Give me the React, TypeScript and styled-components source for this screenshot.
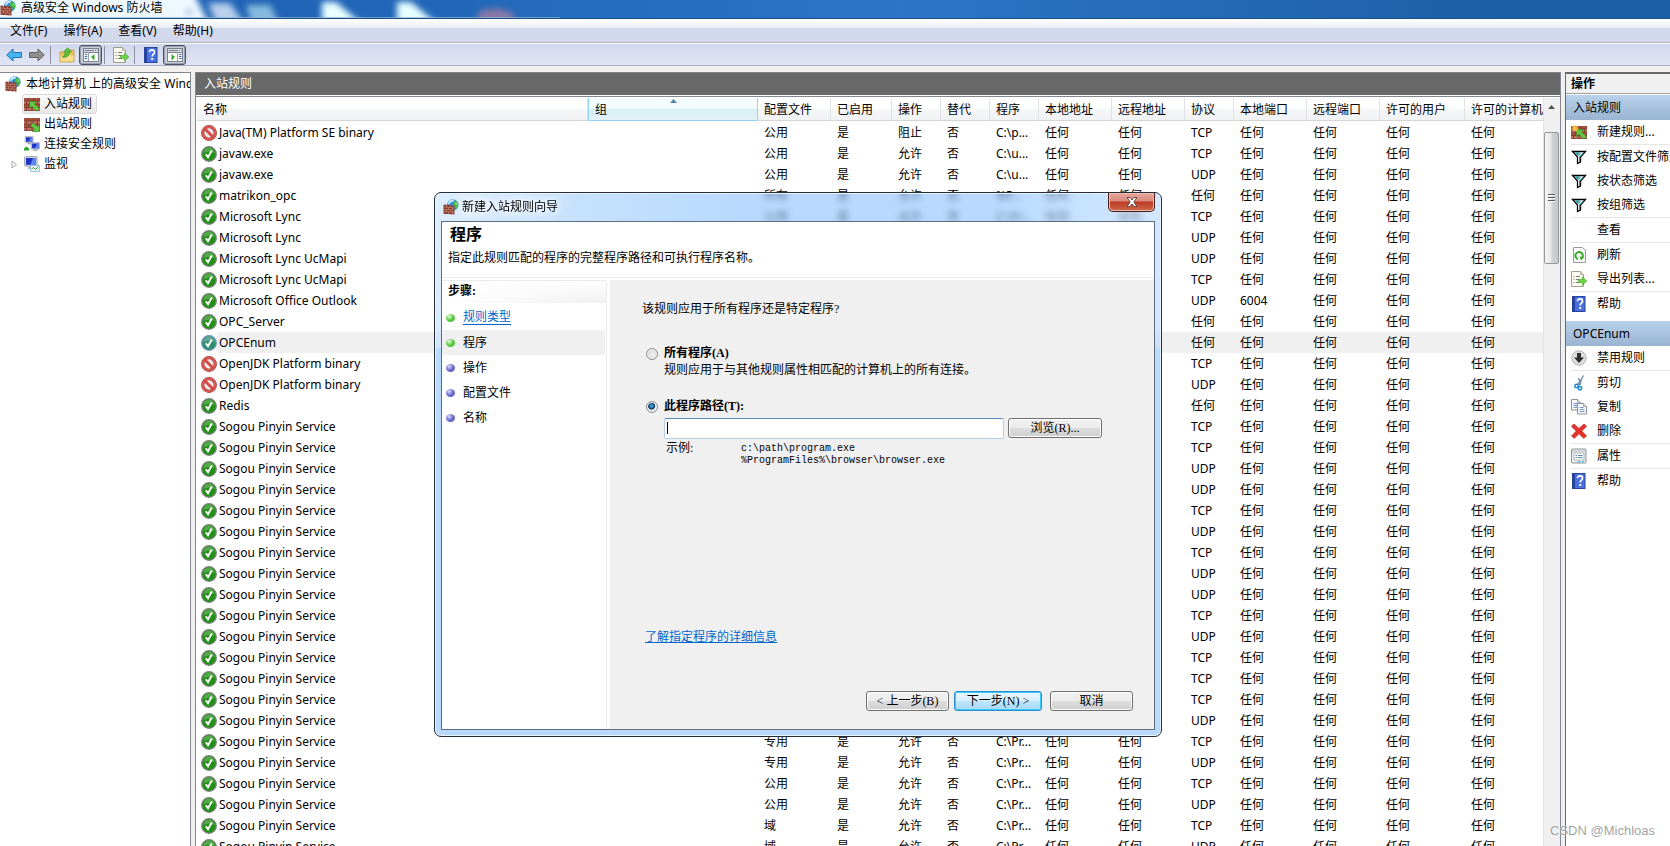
import React from "react";
import styled, { createGlobalStyle, css } from "styled-components";

const UI_FONT = `"Noto Sans", "Noto Sans CJK SC", sans-serif`;
const WIZARD_FONT = `"Liberation Serif", "Noto Sans CJK SC", serif`;

const GlobalStyle = createGlobalStyle`
  *, *::before, *::after { box-sizing: border-box; }
  body { margin: 0; font: 12px/20px ${UI_FONT}; color: #000; background: #f0f0f0; overflow: hidden; }
  button, input { font: inherit; color: inherit; margin: 0; }
`;

/* ---------- icons ---------- */

const Icon = styled.svg`
  display: block;
  width: 16px;
  height: 16px;
  flex: none;
`;

const Bricks = () => (
  <g>
    <rect x="0" y="2" width="16" height="13" fill="#7c3c2e" />
    {[0, 1, 2, 3].map((r) => (
      <g key={r} fill={r % 2 ? "#bd7160" : "#a9503d"}>
        <rect x="0" y={2 + r * 3.3} width={r % 2 ? 2 : 4} height="2.5" />
        <rect x={r % 2 ? 3 : 5} y={2 + r * 3.3} width="4.500" height="2.5" />
        <rect x={r % 2 ? 8.5 : 10.5} y={2 + r * 3.3} width="4.500" height="2.5" />
        <rect x={r % 2 ? 14 : 15.5} y={2 + r * 3.3} width={r % 2 ? 2 : 0.5} height="2.5" />
      </g>
    ))}
  </g>
);

const FirewallIcon = () => (
  <Icon viewBox="0 0 16 16">
    <circle cx="9.800" cy="6" r="5.700" fill="#2f86d8" />
    <path d="M5.500 3c1.500-2 4-2.700 6-2.300l-1 1.800-2.500.8-1.500 2-1.500.200z" fill="#c9edff" />
    <path d="M10 3l3-1.200c2 1.500 2.800 4 2.200 6L13 10.500l-1-3-2.500-1.500z" fill="#3fb84a" />
    <path d="M12.500 3l1.500 1-1 2z" fill="#b8f0a0" />
    <path d="M.5 5.500l11 1.200v8.800l-11-.8z" fill="#8a3828" />
    <g stroke="#d09a8b" strokeWidth=".6" fill="none">
      <path d="M.5 8l11 .8M.5 10.400l11 .6M.5 12.600l11 .6" />
      <path d="M3.500 5.900v2.300M7.500 6.300v2.300M5.500 8.400v2.200M9.500 8.600v2.200M3.500 10.600v2.200M7.500 10.800v2.200M5.500 12.900v2M9.500 13.100v2" />
    </g>
  </Icon>
);

const InboundArrow = () => (
  <path d="M5.500 5.500h7l-2.200 2.200 5.200 4.800-2.700 2.700-5-5-2.300 2.300z" fill="#63c944" stroke="#2f8a20" strokeWidth=".7" />
);

const InboundIcon = () => (
  <Icon viewBox="0 0 16 16">
    <Bricks />
    <InboundArrow />
  </Icon>
);

const OutboundIcon = () => (
  <Icon viewBox="0 0 16 16">
    <Bricks />
    <path d="M15.500 15.500h-7l2.200-2.200-4.200-3.800 2.700-2.700 4 4 2.300-2.300z" fill="#63c944" stroke="#2f8a20" strokeWidth=".7" />
  </Icon>
);

const NewRuleIcon = () => (
  <Icon viewBox="0 0 16 16">
    <Bricks />
    <InboundArrow />
    <path d="M4 0l.8 2.700L7.500 1.500 6 4l2.300 1-2.500.8L6 8 4 6.500 2 8l.3-2.300L0 5l2-1L.8 1.500l2.500 1z" fill="#f7c23f" />
  </Icon>
);

const Monitor = ({ x, y, s }: { x: number; y: number; s: number }) => (
  <g transform={`translate(${x} ${y}) scale(${s})`}>
    <rect x="0" y="0" width="11" height="8.500" rx="1" fill="#cfd3dc" stroke="#8b91a0" strokeWidth=".6" />
    <rect x="1.300" y="1.300" width="8.400" height="6" fill="#1d35c4" />
    <path d="M5 7.300L7.500 1.300h2.200v6z" fill="#5c86f4" />
    <path d="M4 8.700h3l1.500 2h-6z" fill="#a9adb8" />
  </g>
);

const ConnectionIcon = () => (
  <Icon viewBox="0 0 16 16">
    <Monitor x={1} y={0.3} s={0.75} />
    <Monitor x={7} y={6.500} s={0.8} />
    <path d="M0 14.500v-2l2.500-2 2.500 2v2z" fill="#2fa62f" />
  </Icon>
);

const MonitorIcon = () => (
  <Icon viewBox="0 0 16 16">
    <Monitor x={0.500} y={0.500} s={1.150} />
    <rect x="6.500" y="9.500" width="9" height="6" fill="#eef6ff" stroke="#7fb4d8" strokeWidth=".7" />
    <path d="M7.500 13l2-1.500 2 2 3-3" stroke="#2fa62f" fill="none" />
  </Icon>
);

const AllowIcon = ({ selected }: { selected?: boolean }) => (
  <Icon viewBox="0 0 16 16">
    <circle cx="8" cy="8" r="7.300" fill={selected ? "#2f8f6f" : "#219016"} stroke={selected ? "#6f94bd" : "#7f827f"} strokeWidth="1.300" />
    <path d="M2.500 7a5.500 5.500 0 0 1 11 0c-3-1.500-8-1.500-11 0z" fill="#fff" opacity=".22" />
    <path d="M4.800 8.300l2.200 3 3.800-6.800" stroke="#fff" strokeWidth="1.900" fill="none" />
  </Icon>
);

const BlockIcon = () => (
  <Icon viewBox="0 0 16 16">
    <circle cx="8" cy="8" r="6.300" fill="#f0eaea" stroke="#8f4a48" strokeWidth="3.300" />
    <circle cx="8" cy="8" r="6.300" fill="none" stroke="#de5650" strokeWidth="2.300" />
    <path d="M3.500 3.500l9 9" stroke="#d64a45" strokeWidth="2.800" />
  </Icon>
);

const HelpIcon = () => (
  <Icon viewBox="0 0 16 16">
    <rect x="1.500" y=".5" width="12.500" height="15" fill="#4a70de" stroke="#27439c" />
    <rect x="1.500" y=".5" width="2.500" height="15" fill="#27439c" />
    <path d="M6.500 5.200c0-3.200 5-3 5 0 0 2-2.300 2-2.300 4.300" stroke="#fff" strokeWidth="1.700" fill="none" />
    <rect x="8.200" y="11" width="2" height="2" fill="#fff" />
  </Icon>
);

const ArrowIcon = ({ back }: { back?: boolean }) => (
  <Icon viewBox="0 0 16 16">
    {back ? (
      <path d="M.7 8l6.300-6v3.500h8.500v5H7V14z" fill="#45b4ef" stroke="#2372b4" />
    ) : (
      <path d="M15.300 8L9 2v3.500H.5v5H9V14z" fill="#8f8f8f" stroke="#646464" />
    )}
  </Icon>
);

const FolderUpIcon = () => (
  <Icon viewBox="0 0 16 16">
    <path d="M1 5h5l1-2h8v12H1z" fill="#e9c25c" stroke="#b98d2c" strokeWidth=".7" />
    <path d="M1.500 8.500h13v6h-13z" fill="#f8dd8e" />
    <path d="M3 10c2-1 3-2.500 3.300-5H4.500L8.500.7l4 4.300h-2c0 4-3 6-7.500 5z" fill="#55bf3f" stroke="#2c8a22" strokeWidth=".5" />
  </Icon>
);

const PaneIcon = ({ right }: { right?: boolean }) => (
  <Icon viewBox="0 0 16 16">
    <rect x=".5" y="1.500" width="15" height="13" fill="#fff" stroke="#7b828e" />
    <rect x="1" y="2" width="14" height="3" fill="#d5d9e0" />
    <path d="M2 3.500h9M12 3.500h1M14 3.500h.7M1 5.500h14" stroke="#7b828e" />
    <path d={right ? "M10.500 5v9" : "M5.500 5v9"} stroke="#9aa0aa" />
    <path
      d={right ? "M12 7.500h2.500M12 9.500h2.500M12 11.500h2.500" : "M1.800 7.500h2.500M1.800 9.500h2.500M1.800 11.500h2.500"}
      stroke="#3c6fb8"
    />
    <path d={right ? "M4.500 7l3.500 3-3.500 3.500z" : "M11.500 7L8 10l3.500 3.500z"} fill="#3aa82a" />
  </Icon>
);

const ExportIcon = () => (
  <Icon viewBox="0 0 16 16">
    <path d="M.5.5h9l3 3v12H.5z" fill="#fbfaf0" stroke="#a19d8b" />
    <path d="M9.500.5v3h3" fill="#ddd9c5" stroke="#a19d8b" strokeWidth=".7" />
    <path d="M2.500 5.500h1M5 5.500h4M2.500 8.500h1M5 8.500h3M2.500 11.500h1M5 11.500h3" stroke="#7d7a6c" />
    <path d="M7.500 8.500h4V6l4.300 4-4.300 4v-2.500h-4z" fill="#6dd444" stroke="#3f9c25" strokeWidth=".6" />
  </Icon>
);

const FilterIcon = () => (
  <Icon viewBox="0 0 16 16">
    <path d="M1.500 2.500h13L9.500 8v5l-3 1.500V8z" fill="#fff" stroke="#000" strokeWidth="1.300" />
    <path d="M3.500 3.200H8L7.500 7.500z" fill="#17a3a0" />
    <path d="M9 8v4.500l-1 .8V8l4-4.300h1z" fill="#17a3a0" />
    <path d="M7 3.500h3L8.500 7z" fill="#9a9a9a" />
  </Icon>
);

const RefreshIcon = () => (
  <Icon viewBox="0 0 16 16">
    <path d="M2.500.5h9l3 3v12h-12z" fill="#fafafa" stroke="#9a9a9a" />
    <path d="M7 12.200A3.700 3.700 0 1 1 11 11" stroke="#36ad27" strokeWidth="2" fill="none" />
    <path d="M8.500 9.500l4.500.5-3 3.500z" fill="#36ad27" />
  </Icon>
);

const DisableIcon = () => (
  <Icon viewBox="0 0 16 16">
    <circle cx="8" cy="8" r="7.200" fill="#dedede" stroke="#b3b3b3" />
    <path d="M6 3h4v4.500h3L8 13 3 7.500h3z" fill="#2e2e2e" />
  </Icon>
);

const CutIcon = () => (
  <Icon viewBox="0 0 16 16">
    <path d="M12.500.5L8.500 10l-1.700-1zM7.500 3l1.500 7 1-2.500z" fill="#8fa5ba" stroke="#5f7f9e" strokeWidth=".7" />
    <circle cx="5.500" cy="11" r="1.700" fill="none" stroke="#1c86d1" strokeWidth="1.500" />
    <circle cx="9" cy="13.300" r="1.700" fill="none" stroke="#1c86d1" strokeWidth="1.500" />
  </Icon>
);

const CopyIcon = () => (
  <Icon viewBox="0 0 16 16">
    {[[0.5, 0.5], [6.5, 4.500]].map(([x, y]) => (
      <g key={x} transform={`translate(${x} ${y})`}>
        <path d="M0 0h6l3 3v7.500H0z" fill="#fbfbfd" stroke="#8a8f99" />
        <path d="M6 0v3h3" fill="#dfe3ea" stroke="#8a8f99" strokeWidth=".7" />
        <path d="M2 4h4M2 6h5M2 8h5" stroke="#4f78b8" strokeWidth=".8" />
      </g>
    ))}
  </Icon>
);

const DeleteIcon = () => (
  <Icon viewBox="0 0 16 16">
    <path
      d="M3 1l5 4.500L13 1l2.500 2.300L10.700 8l4.800 5-2.800 2.300L8 10.800 3.300 15.300.5 13l4.800-5L.5 3.300z"
      fill="#e8332d"
      stroke="#b3231e"
      strokeWidth=".7"
    />
  </Icon>
);

const PropertiesIcon = () => (
  <Icon viewBox="0 0 16 16">
    <rect x=".5" y="1" width="14.500" height="14" rx="1" fill="#eef0f2" stroke="#8d9196" />
    <path d="M1 3h14" stroke="#b4b8bd" />
    <rect x="3" y="5" width="10" height="7" fill="#fff" stroke="#9da2a8" strokeWidth=".8" />
    <path d="M4.500 7.500H6M7 7.500h4.500M4.500 9.500H6M7 9.500h4.500" stroke="#5d87b0" />
    <path d="M6.500 13.800h3M11 13.800h2" stroke="#29b6e8" />
  </Icon>
);

/* ---------- window chrome ---------- */

const Shell = styled.div`
  display: flex;
  flex-direction: column;
  height: 100vh;
  overflow: hidden;
  position: relative;
`;

const TitleBar = styled.header`
  display: flex;
  align-items: center;
  gap: 5px;
  position: relative;
  height: 19px;
  padding-bottom: 3px;
  flex: none;
  overflow: hidden;
  border-bottom: 1px solid #1d4f86;
  background: linear-gradient(90deg, #2161b4, #2167b8 420px, #2b76c6 900px, #1d5fa6 1500px);
`;

/* desktop showing through the glass caption */
const GlassBackdrop = styled.svg`
  position: absolute;
  left: 0;
  top: 0;
  width: 560px;
  height: 18px;
  z-index: 0;

  & g { filter: blur(3px); }
`;

const CaptionContent = styled.div`
  display: flex;
  align-items: center;
  gap: 5px;
  position: relative;
`;

const WindowTitle = styled.h1`
  margin: 0;
  font-size: 12px;
  font-weight: 400;
  line-height: 16px;
`;

const MenuBar = styled.nav`
  display: flex;
  gap: 16px;
  height: 24px;
  padding-left: 10px;
  flex: none;
  border-bottom: 1px solid #b4b4bd;
  background: linear-gradient(#fff, #e9edf5 9px, #d3d9ed 9px, #d3d9ed);
`;

const MenuItem = styled.button`
  padding: 0;
  border: 0;
  background: none;
  line-height: 23px;
`;

const ToolBar = styled.div`
  display: flex;
  align-items: center;
  height: 23px;
  padding-left: 2px;
  flex: none;
  border-top: 1px solid #fff;
  border-bottom: 1px solid #a9adc0;
  background: linear-gradient(#d2d8ec, #e0e5f5);
`;

const ToolButton = styled.button<{ $on?: boolean }>`
  display: grid;
  place-items: center;
  width: 23px;
  height: 20px;
  padding: 0;
  border: 1px solid transparent;
  border-radius: 3px;
  background: none;
  ${(p) =>
    p.$on &&
    css`
      margin-left: 1px;
      border-color: #4c5260;
      background: #c9ceda;
      box-shadow: inset 0 0 0 1px #9aa0b0;
    `}
`;

const ToolDivider = styled.span`
  width: 1px;
  height: 18px;
  margin: 0 4px 0 2px;
  background: #8d909c;
`;

const Panes = styled.div`
  display: flex;
  gap: 4px;
  flex: 1;
  min-height: 0;
  padding-top: 6px;
`;

/* ---------- tree ---------- */

const TreePane = styled.aside`
  width: 191px;
  flex: none;
  overflow: hidden;
  border: 1px solid #828790;
  border-left: 0;
  border-bottom: 0;
  background: #fff;
`;

const TreeList = styled.ul`
  margin: 0;
  padding: 0;
  list-style: none;
`;

const TreeRow = styled.li<{ $root?: boolean }>`
  display: flex;
  align-items: center;
  height: 20px;
  padding-left: ${(p) => (p.$root ? 5 : 11)}px;
  margin-top: ${(p) => (p.$root ? 1 : 0)}px;
  white-space: nowrap;
`;

const Twisty = styled.svg`
  width: 7px;
  height: 9px;
  margin-right: 4px;
  flex: none;
`;

const TreeLabel = styled.button<{ $selected?: boolean }>`
  display: flex;
  align-items: center;
  gap: 4px;
  height: 20px;
  padding: 0 4px 0 1px;
  border: 1px solid ${(p) => (p.$selected ? "#d9d9d9" : "transparent")};
  border-radius: 3px;
  background: ${(p) => (p.$selected ? "linear-gradient(#fafafa, #e9e9e9)" : "none")};
  white-space: nowrap;
`;

const RootLabel = styled.span`
  flex: 1;
  min-width: 0;
  margin-left: 5px;
  overflow: hidden;
`;

/* ---------- rule list ---------- */

const ListPane = styled.main`
  display: flex;
  flex-direction: column;
  flex: 1;
  min-width: 0;
  border-right: 1px solid #828790;
  border-left: 1px solid #828790;
  background: #fff;
`;

const ListTitle = styled.h2`
  margin: 0 0 1px;
  padding-left: 8px;
  height: 23px;
  flex: none;
  border-top: 1px solid #828282;
  background: #696969;
  color: #fff;
  font-size: 12px;
  font-weight: 400;
  line-height: 21px;
`;

const ListBody = styled.div`
  display: flex;
  flex: 1;
  min-height: 0;
  padding: 1px 0 0 1px;
  border-top: 1px solid #828790;
`;

const TableClip = styled.div`
  flex: 1;
  min-width: 0;
  overflow: hidden;
`;

const RuleTable = styled.table`
  width: 100%;
  table-layout: fixed;
  border-collapse: separate;
  border-spacing: 0;
`;

const Col = styled.col<{ $w?: number }>`
  width: ${(p) => (p.$w ? `${p.$w}px` : "auto")};
`;

const HeadCell = styled.th<{ $sorted?: boolean }>`
  position: relative;
  height: 23px;
  padding: 1px 0 0 6px;
  overflow: hidden;
  border-right: 1px solid ${(p) => (p.$sorted ? "#8fd4f5" : "#dfe3e8")};
  border-bottom: 1px solid ${(p) => (p.$sorted ? "#8fd4f5" : "#d5d5d5")};
  border-left: ${(p) => (p.$sorted ? "1px solid #8fd4f5" : "0")};
  background: ${(p) =>
    p.$sorted
      ? "linear-gradient(#f4fbfd 10px, #dceff6 11px, #e1f1f7)"
      : "linear-gradient(#fff 10px, #f6f7f9 11px, #f1f2f4)"};
  font-weight: 400;
  line-height: 21px;
  text-align: left;
  white-space: nowrap;

  &:last-child { border-right: 0; }
`;

const SortMark = styled.svg`
  position: absolute;
  top: 1px;
  left: 48%;
  width: 7px;
  height: 4px;
`;

const Spacer = styled.tbody`
  & td { height: 1px; padding: 0; }
`;

const RuleRow = styled.tr<{ $selected?: boolean }>`
  --fill: ${(p) => (p.$selected ? "#f0f0f0" : "transparent")};
`;

const Cell = styled.td`
  height: 21px;
  padding: 0 0 0 6px;
  overflow: hidden;
  background: var(--fill);
  line-height: 21px;
  white-space: nowrap;
`;

const NameCell = styled(Cell)`
  padding: 0 0 0 4px;
  background: none;
`;

const NameBox = styled.div`
  display: flex;
  align-items: center;
`;

const NameText = styled.span`
  flex: 1;
  padding-left: 2px;
  background: var(--fill);
`;

const ScrollTrack = styled.div`
  width: 17px;
  flex: none;
  padding-top: 6px;
  border-left: 1px solid #e3e3e3;
  background: #f0f0f0;
`;

const ScrollArrow = styled.svg`
  display: block;
  width: 7px;
  height: 4px;
  margin: 1px auto 23px 4px;
`;

const ScrollThumb = styled.div`
  display: grid;
  place-content: center;
  gap: 1px;
  width: 15px;
  height: 132px;
  border: 1px solid #979797;
  border-radius: 2px;
  background: linear-gradient(90deg, #f6f6f6, #e8e8ea 45%, #d2d3d7 55%, #c6c7cc);
`;

const Grip = styled.i`
  width: 7px;
  height: 2px;
  border-top: 1px solid #55565c;
  background: #fff;
`;

/* ---------- action pane ---------- */

const ActionPane = styled.aside`
  width: 105px;
  flex: none;
  overflow: hidden;
  border-left: 1px solid #696969;
  border-top: 2px solid #696969;
  background: #fff;
`;

const ActionTitle = styled.h2`
  margin: 0 0 1px;
  height: 20px;
  padding: 1px 0 0 5px;
  border-bottom: 1px solid #a0a0a0;
  background: #f0f0f0;
  font-size: 12px;
  line-height: 18px;
  font-weight: 700;
`;

const ActionGroup = styled.section`
  margin-bottom: 5px;
`;

const GroupTitle = styled.h3`
  margin: 0;
  height: 25px;
  padding-left: 7px;
  background: linear-gradient(#b9d1ea, #99b4d1);
  font-size: 12px;
  font-weight: 400;
  line-height: 25px;
`;

const ActionItem = styled.button<{ $line?: boolean }>`
  display: flex;
  align-items: center;
  gap: 10px;
  width: 100%;
  height: ${(p) => (p.$line ? 25 : 24)}px;
  padding: 0;
  margin-left: 5px;
  border: 0;
  border-bottom: ${(p) => (p.$line ? "1px solid #e6e6e6" : "0")};
  background: none;
  white-space: nowrap;
`;

const IconGap = styled.span`
  width: 16px;
  flex: none;
`;

/* ---------- wizard ---------- */

const Wizard = styled.div`
  position: absolute;
  left: 434px;
  top: 192px;
  display: flex;
  flex-direction: column;
  width: 728px;
  height: 545px;
  padding: 0 6px 6px;
  border: 1px solid #252d38;
  border-radius: 7px;
  box-shadow: inset 0 0 0 1px #e8f4ff;
  background:
    linear-gradient(#b9dafd, #b9dafd) 0 155px / 100% 100% no-repeat,
    linear-gradient(100deg, #c8e3ff99 0, #a5cffa99 120px, #8ac1fc99 300px, #8ac1fc99 560px, #b5d8ff99 700px);
  backdrop-filter: blur(3px);
`;

const WizardCaption = styled.div`
  display: flex;
  align-items: flex-start;
  height: 28px;
  flex: none;
  padding-left: 2px;
  font-family: ${UI_FONT};
`;

const CaptionIcon = styled.span`
  padding: 6px 3px 0 0;
`;

const CaptionText = styled.h2`
  margin: 4px 0 0;
  font-size: 12px;
  font-weight: 400;
  line-height: 20px;
  text-shadow: 0 0 6px #fff, 0 0 10px #fff, 0 0 14px #fff;
`;

const CloseButton = styled.button`
  display: grid;
  place-items: center;
  width: 47px;
  height: 19px;
  margin-left: auto;
  padding: 0;
  border: 1px solid #4b1d1c;
  border-top: 0;
  border-radius: 0 0 5px 5px;
  box-shadow: inset 0 0 0 1px #f0b9ae;
  background: linear-gradient(#e6a598, #d98b7e 8px, #bd3a22 9px, #cf6a4c);
`;

const WizardBody = styled.div`
  display: flex;
  flex-direction: column;
  flex: 1;
  min-height: 0;
  border: 1px solid #5d6d80;
  background: #fff;
  font-family: ${WIZARD_FONT};
  line-height: 16px;
`;

const WizardHeader = styled.header`
  height: 56px;
  padding: 3px 0 0 6px;
  flex: none;
  border-bottom: 1px solid #ebebeb;
`;

const PageTitle = styled.h3`
  margin: 0 0 5px 2px;
  font-size: 16px;
  line-height: 20px;
`;

const Paragraph = styled.p`
  margin: 0;
`;

const WizardColumns = styled.div`
  display: flex;
  gap: 3px;
  flex: 1;
  min-height: 0;
  padding-top: 2px;
`;

const Steps = styled.nav`
  width: 165px;
  flex: none;
  border-top: 1px solid #ebebeb;
  border-right: 1px solid #ebebeb;
`;

const StepsTitle = styled.h4`
  margin: 0 0 2px;
  height: 22px;
  padding-left: 6px;
  background: linear-gradient(90deg, #fff, #fff0), linear-gradient(#fff, #f0f0f0);
  font-size: 12px;
  line-height: 21px;
`;

const StepList = styled.ol`
  margin: 0;
  padding: 0;
  list-style: none;
`;

const Step = styled.li<{ $current?: boolean; $done?: boolean }>`
  display: flex;
  align-items: center;
  gap: 8px;
  height: 25px;
  margin-right: 1px;
  padding-left: 4px;
  background: ${(p) => (p.$current ? "#f0f0f0" : "none")};

  &::before {
    content: "";
    width: 9px;
    height: 8px;
    border-radius: 50%;
    background: ${(p) =>
      p.$done
        ? "radial-gradient(circle at 35% 30%, #e4f9dd, #57cc3c 50%, #43a52e)"
        : "radial-gradient(circle at 35% 30%, #dcdcf8, #6a68cf 50%, #5553b4)"};
  }
`;

const StepLink = styled.a`
  color: #0066cc;
  text-decoration: none;
  border-bottom: 1px solid #0066cc;
  line-height: 14px;
`;

const Page = styled.section`
  display: flex;
  flex-direction: column;
  flex: 1;
  min-width: 0;
  padding: 21px 21px 18px 32px;
  background: #f0f0f0;
`;

const Options = styled.div`
  padding: 28px 0 0 4px;
`;

const Option = styled.div`
  display: flex;
  gap: 6px;
  margin-bottom: 20px;
`;

const Radio = styled.input`
  appearance: none;
  width: 12px;
  height: 12px;
  margin: 3px 0 0;
  flex: none;
  border: 1px solid #8e8f8f;
  border-radius: 50%;
  box-shadow: inset 0 0 0 1px #f4f4f4;
  background: radial-gradient(circle at 60% 60%, #efefef, #cfd2d5);

  &:checked {
    background: radial-gradient(circle at 45% 40%, #58c4f0 0, #1c6da6 2px, #0b2f52 3px, #dfe5ea 4px);
  }
`;

const OptionBody = styled.div`
  flex: 1;
`;

const OptionLabel = styled.label`
  display: block;
  margin-bottom: 1px;
  font-weight: 700;
`;

const PathRow = styled.div`
  display: flex;
  align-items: flex-start;
  gap: 4px;
  margin-top: 4px;
`;

const PathField = styled.div`
  position: relative;
  width: 340px;

  &::after {
    content: "";
    position: absolute;
    left: 3px;
    top: 4px;
    width: 1px;
    height: 12px;
    background: #000;
  }
`;

const PathInput = styled.input`
  display: block;
  width: 100%;
  height: 21px;
  padding: 0 3px;
  border: 1px solid #b5cfe7;
  border-top-color: #5d8bba;
  border-radius: 2px;
  outline: 0;
  background: #fff;
`;

const PushButton = styled.button<{ $w: number; $default?: boolean }>`
  width: ${(p) => p.$w}px;
  height: 20px;
  padding: 0;
  border: 1px solid ${(p) => (p.$default ? "#2a8dd4" : "#707070")};
  border-radius: 3px;
  box-shadow: inset 0 0 0 1px ${(p) => (p.$default ? "#37cdf8" : "#fcfcfc")};
  background: ${(p) =>
    p.$default
      ? "linear-gradient(#eaf6fd, #d9f0fc 50%, #bee6fd 50%, #a7d9f5)"
      : "linear-gradient(#f2f2f2, #ebebeb 50%, #dddddd 50%, #cfcfcf)"};
  line-height: 16px;
  white-space: pre;
`;

const Example = styled.dl`
  display: flex;
  margin: 1px 0 0 2px;

  & dt { width: 75px; }
  & dd { margin: 3px 0 0; font: 10px/12px "Liberation Mono", monospace; }
`;

const LearnMore = styled.a`
  align-self: flex-start;
  margin: auto 0 46px 3px;
  color: #0066cc;
`;

const ButtonRow = styled.footer`
  display: flex;
  gap: 8px;
  justify-content: flex-end;
`;

const BackNext = styled.div`
  display: flex;
  gap: 5px;
`;

const Watermark = styled.div`
  position: absolute;
  right: 15px;
  bottom: 5px;
  color: #8a8a8acc;
  font: 13px/20px "Liberation Sans", sans-serif;
  text-shadow: 0 0 2px #fff;
`;

/* ---------- data ---------- */

const columns: { title: string; width?: number }[] = [
  { title: "名称" },
  { title: "组", width: 170 },
  { title: "配置文件", width: 73 },
  { title: "已启用", width: 61 },
  { title: "操作", width: 49 },
  { title: "替代", width: 49 },
  { title: "程序", width: 49 },
  { title: "本地地址", width: 73 },
  { title: "远程地址", width: 73 },
  { title: "协议", width: 49 },
  { title: "本地端口", width: 73 },
  { title: "远程端口", width: 73 },
  { title: "许可的用户", width: 85 },
  { title: "许可的计算机", width: 78 },
];

type Rule = { name: string; profile: string; program: string; protocol: string; port?: string; blocked?: boolean };

const rule = (name: string, protocol: string, extra: Partial<Rule> = {}): Rule => ({
  name,
  protocol,
  profile: "公用",
  program: "C:\\Pr...",
  ...extra,
});

const sogou: [string, string][] = [
  ["TCP", "公用"], ["TCP", "专用"], ["UDP", "公用"], ["UDP", "专用"], ["TCP", "域"], ["UDP", "域"],
  ["TCP", "公用"], ["UDP", "公用"], ["UDP", "专用"], ["TCP", "专用"], ["UDP", "域"], ["TCP", "域"],
  ["TCP", "公用"], ["TCP", "域"], ["UDP", "域"], ["TCP", "专用"], ["UDP", "专用"], ["TCP", "公用"],
  ["UDP", "公用"], ["TCP", "域"], ["UDP", "域"],
];

const rules: Rule[] = [
  rule("Java(TM) Platform SE binary", "TCP", { program: "C:\\p...", blocked: true }),
  rule("javaw.exe", "TCP", { program: "C:\\u..." }),
  rule("javaw.exe", "UDP", { program: "C:\\u..." }),
  rule("matrikon_opc", "任何", { profile: "所有", program: "%P..." }),
  rule("Microsoft Lync", "TCP"),
  rule("Microsoft Lync", "UDP"),
  rule("Microsoft Lync UcMapi", "UDP"),
  rule("Microsoft Lync UcMapi", "TCP"),
  rule("Microsoft Office Outlook", "UDP", { port: "6004" }),
  rule("OPC_Server", "任何"),
  rule("OPCEnum", "任何"),
  rule("OpenJDK Platform binary", "TCP", { blocked: true }),
  rule("OpenJDK Platform binary", "UDP", { blocked: true }),
  rule("Redis", "任何"),
  ...sogou.map(([protocol, profile]) => rule("Sogou Pinyin Service", protocol, { profile })),
];

const treeItems = [
  { label: "入站规则", icon: <InboundIcon />, selected: true },
  { label: "出站规则", icon: <OutboundIcon /> },
  { label: "连接安全规则", icon: <ConnectionIcon /> },
  { label: "监视", icon: <MonitorIcon />, expandable: true },
];

const actionGroups = [
  {
    title: "入站规则",
    items: [
      { label: "新建规则...", icon: <NewRuleIcon />, line: true },
      { label: "按配置文件筛选", icon: <FilterIcon /> },
      { label: "按状态筛选", icon: <FilterIcon /> },
      { label: "按组筛选", icon: <FilterIcon />, line: true },
      { label: "查看", icon: <IconGap />, line: true },
      { label: "刷新", icon: <RefreshIcon /> },
      { label: "导出列表...", icon: <ExportIcon />, line: true },
      { label: "帮助", icon: <HelpIcon /> },
    ],
  },
  {
    title: "OPCEnum",
    items: [
      { label: "禁用规则", icon: <DisableIcon />, line: true },
      { label: "剪切", icon: <CutIcon /> },
      { label: "复制", icon: <CopyIcon /> },
      { label: "删除", icon: <DeleteIcon />, line: true },
      { label: "属性", icon: <PropertiesIcon />, line: true },
      { label: "帮助", icon: <HelpIcon /> },
    ],
  },
];

const steps = ["规则类型", "程序", "操作", "配置文件", "名称"];

/* ---------- composition ---------- */

const RuleList = () => (
  <RuleTable>
    <colgroup>
      {columns.map((c) => (
        <Col key={c.title} $w={c.width} />
      ))}
    </colgroup>
    <thead>
      <tr>
        {columns.map((c) => (
          <HeadCell key={c.title} $sorted={c.title === "组"}>
            {c.title}
            {c.title === "组" && (
              <SortMark viewBox="0 0 7 4">
                <path d="M0 4l3.500-4L7 4z" fill="#4f87a8" />
              </SortMark>
            )}
          </HeadCell>
        ))}
      </tr>
    </thead>
    <Spacer>
      <tr>
        <td colSpan={columns.length} />
      </tr>
    </Spacer>
    <tbody>
      {rules.map((r, i) => {
        const selected = r.name === "OPCEnum";
        return (
          <RuleRow key={i} $selected={selected}>
            <NameCell>
              <NameBox>
                {r.blocked ? <BlockIcon /> : <AllowIcon selected={selected} />}
                <NameText>{r.name}</NameText>
              </NameBox>
            </NameCell>
            <Cell />
            <Cell>{r.profile}</Cell>
            <Cell>是</Cell>
            <Cell>{r.blocked ? "阻止" : "允许"}</Cell>
            <Cell>否</Cell>
            <Cell>{r.program}</Cell>
            <Cell>任何</Cell>
            <Cell>任何</Cell>
            <Cell>{r.protocol}</Cell>
            <Cell>{r.port ?? "任何"}</Cell>
            <Cell>任何</Cell>
            <Cell>任何</Cell>
            <Cell>任何</Cell>
          </RuleRow>
        );
      })}
    </tbody>
  </RuleTable>
);

const RuleWizard = () => (
  <Wizard role="dialog" aria-labelledby="wizard-caption">
    <WizardCaption>
      <CaptionIcon>
        <FirewallIcon />
      </CaptionIcon>
      <CaptionText id="wizard-caption">新建入站规则向导</CaptionText>
      <CloseButton aria-label="关闭">
        <svg width="12" height="10" viewBox="0 0 12 10">
          <path d="M1 .5h3L6 3l2-2.500h3L7.800 5 11 9.500H8L6 7 4 9.500H1L4.200 5z" fill="#fff" stroke="#5b3a3a" strokeWidth=".9" />
        </svg>
      </CloseButton>
    </WizardCaption>
    <WizardBody>
      <WizardHeader>
        <PageTitle>程序</PageTitle>
        <Paragraph>指定此规则匹配的程序的完整程序路径和可执行程序名称。</Paragraph>
      </WizardHeader>
      <WizardColumns>
        <Steps>
          <StepsTitle>步骤:</StepsTitle>
          <StepList>
            {steps.map((s, i) => (
              <Step key={s} $done={i < 2} $current={i === 1}>
                {i === 0 ? <StepLink href="#type">{s}</StepLink> : s}
              </Step>
            ))}
          </StepList>
        </Steps>
        <Page>
          <Paragraph>该规则应用于所有程序还是特定程序?</Paragraph>
          <Options>
            <Option>
              <Radio type="radio" name="target" id="all-programs" />
              <OptionBody>
                <OptionLabel htmlFor="all-programs">所有程序(A)</OptionLabel>
                <Paragraph>规则应用于与其他规则属性相匹配的计算机上的所有连接。</Paragraph>
              </OptionBody>
            </Option>
            <Option>
              <Radio type="radio" name="target" id="one-program" defaultChecked />
              <OptionBody>
                <OptionLabel htmlFor="one-program">此程序路径(T):</OptionLabel>
                <PathRow>
                  <PathField>
                    <PathInput type="text" aria-label="此程序路径" />
                  </PathField>
                  <PushButton $w={94}>浏览(R)...</PushButton>
                </PathRow>
                <Example>
                  <dt>示例:</dt>
                  <dd>
                    c:\path\program.exe
                    <br />
                    %ProgramFiles%\browser\browser.exe
                  </dd>
                </Example>
              </OptionBody>
            </Option>
          </Options>
          <LearnMore href="#details">了解指定程序的详细信息</LearnMore>
          <ButtonRow>
            <BackNext>
              <PushButton $w={83}>{"< 上一步(B)"}</PushButton>
              <PushButton $w={88} $default>{"下一步(N) >"}</PushButton>
            </BackNext>
            <PushButton $w={83}>取消</PushButton>
          </ButtonRow>
        </Page>
      </WizardColumns>
    </WizardBody>
  </Wizard>
);

export default function App() {
  return (
    <>
      <GlobalStyle />
      <Shell>
        <TitleBar>
          <GlassBackdrop viewBox="0 0 560 18">
            <g>
              <path d="M-10-10H192L212 30H-10z" fill="#eef9ff" />
              <circle cx="189" cy="12" r="3" fill="#9fb4d8" />
              <path d="M208 3h22l14 20h-28z" fill="#b9cfec" />
              <path d="M246 5h24l10 20h-28z" fill="#86bbdf" />
              <path d="M322 2h14l26 22h-40z" fill="#e8ffff" />
              <path d="M397 2h14l26 22h-40z" fill="#e8ffff" />
              <path d="M478 12q18-8 36 2v10h-36z" fill="#8a78a6" />
            </g>
            <path d="M0 17.500h560" stroke="#8fb4da" strokeOpacity=".7" />
          </GlassBackdrop>
          <CaptionContent>
            <FirewallIcon />
            <WindowTitle>高级安全 Windows 防火墙</WindowTitle>
          </CaptionContent>
        </TitleBar>
        <MenuBar>
          {["文件(F)", "操作(A)", "查看(V)", "帮助(H)"].map((m) => (
            <MenuItem key={m}>{m}</MenuItem>
          ))}
        </MenuBar>
        <ToolBar>
          <ToolButton aria-label="后退"><ArrowIcon back /></ToolButton>
          <ToolButton aria-label="前进"><ArrowIcon /></ToolButton>
          <ToolDivider />
          <ToolButton aria-label="向上"><FolderUpIcon /></ToolButton>
          <ToolButton aria-label="控制台树" $on><PaneIcon /></ToolButton>
          <ToolDivider />
          <ToolButton aria-label="导出列表"><ExportIcon /></ToolButton>
          <ToolDivider />
          <ToolButton aria-label="帮助"><HelpIcon /></ToolButton>
          <ToolButton aria-label="操作窗格" $on><PaneIcon right /></ToolButton>
        </ToolBar>
        <Panes>
          <TreePane>
            <TreeList>
              <TreeRow $root>
                <FirewallIcon />
                <RootLabel>本地计算机 上的高级安全 Windows 防火墙</RootLabel>
              </TreeRow>
              {treeItems.map((t) => (
                <TreeRow key={t.label}>
                  <Twisty viewBox="0 0 7 9">
                    {t.expandable && <path d="M1 1l4.500 3.500L1 8z" fill="#fff" stroke="#a6a6a6" />}
                  </Twisty>
                  <TreeLabel $selected={t.selected}>
                    {t.icon}
                    {t.label}
                  </TreeLabel>
                </TreeRow>
              ))}
            </TreeList>
          </TreePane>
          <ListPane>
            <ListTitle>入站规则</ListTitle>
            <ListBody>
              <TableClip>
                <RuleList />
              </TableClip>
              <ScrollTrack>
                <ScrollArrow viewBox="0 0 7 4">
                  <path d="M0 4l3.500-4L7 4z" fill="#505050" />
                </ScrollArrow>
                <ScrollThumb>
                  <Grip />
                  <Grip />
                  <Grip />
                </ScrollThumb>
              </ScrollTrack>
            </ListBody>
          </ListPane>
          <ActionPane>
            <ActionTitle>操作</ActionTitle>
            {actionGroups.map((g) => (
              <ActionGroup key={g.title}>
                <GroupTitle>{g.title}</GroupTitle>
                {g.items.map((a) => (
                  <ActionItem key={a.label} $line={a.line}>
                    {a.icon}
                    {a.label}
                  </ActionItem>
                ))}
              </ActionGroup>
            ))}
          </ActionPane>
        </Panes>
        <RuleWizard />
        <Watermark>CSDN @Michloas</Watermark>
      </Shell>
    </>
  );
}
